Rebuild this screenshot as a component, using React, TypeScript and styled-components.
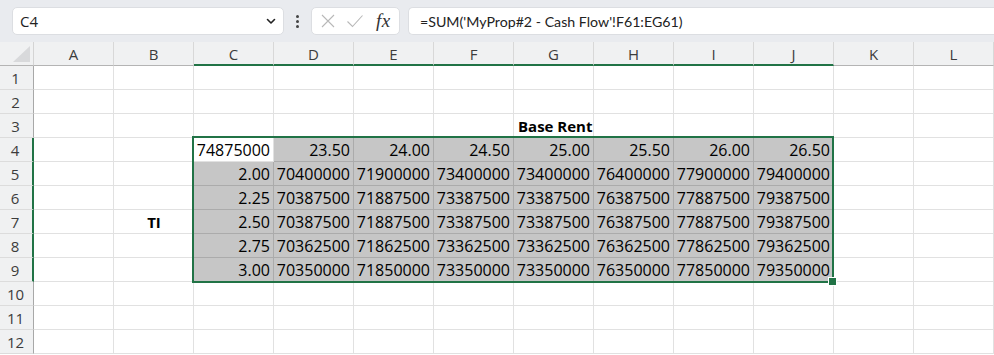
import styled, { createGlobalStyle } from 'styled-components';

const GlobalStyle = createGlobalStyle`
  html, body {
    margin: 0;
    padding: 0;
    background: #fff;
    overflow: hidden;
  }
  body {
    font-family: 'Open Sans', 'Noto Sans', sans-serif;
  }
`;

const COLS = ['A', 'B', 'C', 'D', 'E', 'F', 'G', 'H', 'I', 'J', 'K', 'L'];
const SEL_COLS = ['C', 'D', 'E', 'F', 'G', 'H', 'I', 'J'];
const HEAD_W = 34;
const COL_W = 80;
const HEAD_H = 24;
const ROW_H = 24;
const GREEN = '#217346';

const table: Record<number, string[]> = {
  4: ['74875000', '23.50', '24.00', '24.50', '25.00', '25.50', '26.00', '26.50'],
  5: ['2.00', '70400000', '71900000', '73400000', '73400000', '76400000', '77900000', '79400000'],
  6: ['2.25', '70387500', '71887500', '73387500', '73387500', '76387500', '77887500', '79387500'],
  7: ['2.50', '70387500', '71887500', '73387500', '73387500', '76387500', '77887500', '79387500'],
  8: ['2.75', '70362500', '71862500', '73362500', '73362500', '76362500', '77862500', '79362500'],
  9: ['3.00', '70350000', '71850000', '73350000', '73350000', '76350000', '77850000', '79350000'],
};

const Page = styled.div`
  width: 994px;
  height: 355px;
  overflow: hidden;
  background: #fff;
`;

const FormulaBar = styled.div`
  display: flex;
  align-items: center;
  height: 42px;
  padding: 0 0 0 12px;
  background: #e9ebef;
  overflow: hidden;
  box-sizing: border-box;
`;

const Box = styled.div`
  display: flex;
  align-items: center;
  height: 28px;
  background: #fff;
  border: 1px solid #dcdee2;
  border-radius: 5px;
  box-sizing: border-box;
`;

const NameBox = styled(Box)`
  width: 272px;
  padding: 0 6px 0 7px;
  justify-content: space-between;
  font-size: 15px;
  color: #222;
`;

const Dots = styled.div`
  display: flex;
  flex-direction: column;
  gap: 2px;
  width: 27px;
  align-items: center;
  span {
    width: 3px;
    height: 3px;
    border-radius: 50%;
    background: #444;
  }
`;

const FxBox = styled(Box)`
  width: 89px;
  padding: 0 6px 0 8px;
  gap: 10px;
`;

const Fx = styled.span`
  font-family: 'Liberation Serif', 'DejaVu Serif', serif;
  font-style: italic;
  font-size: 19px;
  color: #333;
  margin-left: 2px;
  letter-spacing: 0.5px;
`;

const FormulaInput = styled(Box)`
  flex: 1;
  margin-left: 8px;
  margin-right: -10px;
  padding-left: 11px;
  font-family: Lato, 'Open Sans', sans-serif;
  font-size: 14.2px;
  color: #222;
  border-right: none;
  border-radius: 5px 0 0 5px;
`;

const Sheet = styled.div`
  position: relative;
  display: grid;
  grid-template-columns: ${HEAD_W}px repeat(12, ${COL_W}px);
  grid-template-rows: ${HEAD_H}px repeat(12, ${ROW_H}px);
`;

const Corner = styled.div`
  position: relative;
  background: #f0f1f2;
  border-right: 1px solid #d4d4d4;
  border-bottom: 1px solid #b4b4b4;
  box-sizing: border-box;
  &::after {
    content: '';
    position: absolute;
    right: 3px;
    bottom: 3px;
    width: 0;
    height: 0;
    border-left: 17px solid transparent;
    border-bottom: 16px solid #d8d9db;
  }
`;

const ColHeader = styled.div<{ $selected?: boolean }>`
  display: flex;
  align-items: center;
  justify-content: center;
  background: #f0f1f2;
  border-right: 1px solid #d8d8d8;
  border-bottom: ${(p) => (p.$selected ? `2px solid ${GREEN}` : '1px solid #b4b4b4')};
  box-sizing: border-box;
  font-size: 15px;
  color: #3c3c3c;
  padding-top: ${(p) => (p.$selected ? '1px' : '0')};
`;

const RowHeader = styled.div<{ $selected?: boolean }>`
  display: flex;
  align-items: center;
  justify-content: center;
  background: #f0f1f2;
  border-right: ${(p) => (p.$selected ? `2px solid ${GREEN}` : '1px solid #a8a8a8')};
  border-bottom: 1px solid #dcdcdc;
  box-sizing: border-box;
  font-size: 15px;
  color: #3c3c3c;
  padding-right: 2px;
`;

const Cell = styled.div<{ $kind?: 'plain' | 'range' | 'active'; $align?: 'left' | 'right' | 'center'; $bold?: boolean }>`
  display: flex;
  align-items: center;
  justify-content: ${(p) => (p.$align === 'right' ? 'flex-end' : p.$align === 'center' ? 'center' : 'flex-start')};
  padding: 1px 3px 0 4px;
  box-sizing: border-box;
  white-space: nowrap;
  overflow: visible;
  position: ${(p) => (p.$bold ? 'relative' : 'static')};
  z-index: ${(p) => (p.$bold ? 1 : 'auto')};
  font-family: 'Open Sans', 'Noto Sans', sans-serif;
  font-size: ${(p) => (p.$bold ? '15px' : '16px')};
  font-weight: ${(p) => (p.$bold ? 700 : 400)};
  color: #000;
  background: ${(p) => (p.$kind === 'range' ? '#c6c6c6' : '#fff')};
  border-right: 1px solid ${(p) => (p.$kind === 'range' ? '#ababab' : '#e1e1e1')};
  border-bottom: 1px solid ${(p) => (p.$kind === 'range' ? '#ababab' : '#e1e1e1')};
`;

const SelectionFrame = styled.div`
  position: absolute;
  left: ${HEAD_W + 2 * COL_W - 2}px;
  top: ${HEAD_H + 3 * ROW_H - 2}px;
  width: ${8 * COL_W + 2}px;
  height: ${6 * ROW_H + 3}px;
  border: 2px solid ${GREEN};
  box-sizing: border-box;
  pointer-events: none;
  z-index: 2;
`;

const FillHandle = styled.div`
  position: absolute;
  right: -5px;
  bottom: -5px;
  width: 7px;
  height: 7px;
  background: ${GREEN};
  border: 1px solid #fff;
`;

const Chevron = () => (
  <svg width="12" height="12" viewBox="0 0 12 12">
    <path d="M2.5 4.5 L6 8 L9.5 4.5" fill="none" stroke="#222" strokeWidth="1.6" strokeLinecap="round" strokeLinejoin="round" />
  </svg>
);

const Cross = () => (
  <svg width="16" height="16" viewBox="0 0 16 16">
    <path d="M2 2 L14 14 M14 2 L2 14" stroke="#b8b8b8" strokeWidth="1.1" />
  </svg>
);

const Check = () => (
  <svg width="18" height="16" viewBox="0 0 18 16">
    <path d="M1.5 8.5 L6.5 13.5 L16.5 2.5" fill="none" stroke="#b8b8b8" strokeWidth="1.1" />
  </svg>
);

const cellFor = (row: number, ci: number) => {
  const col = COLS[ci];
  const si = SEL_COLS.indexOf(col);
  if (table[row] && si >= 0) {
    const kind = row === 4 && col === 'C' ? 'active' : 'range';
    return (
      <Cell key={col + row} $kind={kind} $align="right">
        {table[row][si]}
      </Cell>
    );
  }
  if (row === 3 && col === 'G') {
    return (
      <Cell key={col + row} $bold>
        Base Rent
      </Cell>
    );
  }
  if (row === 7 && col === 'B') {
    return (
      <Cell key={col + row} $bold $align="center">
        TI
      </Cell>
    );
  }
  return <Cell key={col + row} />;
};

const App = () => {
  const rows = Array.from({ length: 12 }, (_, i) => i + 1);
  return (
    <Page>
      <GlobalStyle />
      <FormulaBar>
        <NameBox>
          <span>C4</span>
          <Chevron />
        </NameBox>
        <Dots>
          <span />
          <span />
          <span />
        </Dots>
        <FxBox>
          <Cross />
          <Check />
          <Fx>fx</Fx>
        </FxBox>
        <FormulaInput>=SUM('MyProp#2 - Cash Flow'!F61:EG61)</FormulaInput>
      </FormulaBar>
      <Sheet>
        <Corner />
        {COLS.map((c) => (
          <ColHeader key={c} $selected={SEL_COLS.includes(c)}>
            {c}
          </ColHeader>
        ))}
        {rows.map((r) => [
          <RowHeader key={'h' + r} $selected={r >= 4 && r <= 9}>
            {r}
          </RowHeader>,
          ...COLS.map((_, ci) => cellFor(r, ci)),
        ])}
        <SelectionFrame>
          <FillHandle />
        </SelectionFrame>
      </Sheet>
    </Page>
  );
};

export default App;
